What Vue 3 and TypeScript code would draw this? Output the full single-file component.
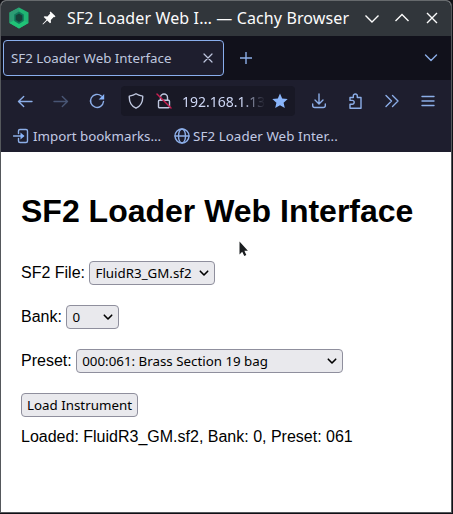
<script setup lang="ts">
import { computed, ref } from 'vue'

const files = ['FluidR3_GM.sf2']
const banks = ['0']
const presets = ['000:061: Brass Section 19 bag']

const file = ref(files[0])
const bank = ref(banks[0])
const preset = ref(presets[0])

const status = computed(
  () => `Loaded: ${file.value}, Bank: ${bank.value}, Preset: ${preset.value.split(':')[1]}`
)
</script>

<template>
  <div class="desktop">
    <div class="window">
      <header class="titlebar">
        <svg class="app-icon" width="20" height="22" viewBox="0 0 20 22">
          <path d="M10 0.5 19.5 5.5V16L10 21.5.5 16V5.500Z" fill="#20b573" />
          <path d="M10 .5.5 5.500V16L5 13V8l5-3Z" fill="#2d9c74" />
          <path d="M.5 16 10 21.500 19.500 16 14.500 13.500 10 16 5 13.500Z" fill="#20c477" />
          <path d="M10 4.500 14.800 7.500V14L10 17 5.200 14V7.500Z" fill="#10765a" />
          <path d="M10 6.500 13.300 8.500V13L10 15 6.700 13V8.500Z" fill="#173f38" />
        </svg>
        <svg class="pin" width="14" height="14" viewBox="0 0 14 14">
          <path d="M8.500.5 13.500 5.300 12.400 6.200 11.700 5.900 8.800 8.900 9 11.500 8 12.300 5.200 9.500 1 13.500.5 13 4.500 8.800 1.700 6 2.500 5.200 5.400 5.400 8.200 2.400 7.700 1.400Z" fill="#fcfcfc" />
        </svg>
        <span class="title">SF2 Loader Web I… — Cachy Browser</span>
        <div class="controls">
          <svg width="30" height="20" viewBox="0 0 30 20"><path d="m8.500 7.500 6.500 6.500 6.500-6.500" /></svg>
          <svg width="30" height="20" viewBox="0 0 30 20"><path d="m8.500 13 6.500-6.500 6.500 6.500" /></svg>
          <svg width="30" height="20" viewBox="0 0 30 20"><path d="m10 5 10 10M20 5 10 15" /></svg>
        </div>
      </header>

      <div class="tabs">
        <div class="tab">
          <span class="tab-name">SF2 Loader Web Interface</span>
          <svg width="10" height="10" viewBox="0 0 10 10"><path d="m1 1 8 8M9 1 1 9" /></svg>
        </div>
        <svg class="new-tab" width="12" height="12" viewBox="0 0 12 12"><path d="M6 .3v11.400M.3 6h11.400" /></svg>
        <svg class="all-tabs" width="14" height="10" viewBox="0 0 14 10"><path d="m1.500 2 5.500 5.500L12.500 2" /></svg>
      </div>

      <nav class="toolbar">
        <svg viewBox="0 0 16 16"><path d="M15 8.500H1.500M6.700 3.500 1.500 8.500 6.700 13.500" /></svg>
        <svg class="dim" viewBox="0 0 16 16"><path d="M1 8.500h13.500M9.300 3.500l5.200 5-5.200 5" /></svg>
        <svg viewBox="0 0 16 16"><path d="M12.300 3A6.500 6.500 0 1 0 14.500 8.500" /><path class="solid" d="M15.200 1v5.500H9.700Z" /></svg>
        <div class="address">
          <svg class="pale" viewBox="0 0 16 16"><path d="M8 .8C6.300 2 4 2.700 1.300 3.100 1 8.500 2.900 12.700 8 15.200 13.100 12.700 15 8.500 14.700 3.100 12 2.700 9.700 2 8 .8Z" /></svg>
          <svg class="pale lock" viewBox="0 0 16 16">
            <path d="M4.500 7V4.500a3.500 3.500 0 0 1 7 0V7M3.500 7.200h9a1 1 0 0 1 1 1v5.500a1 1 0 0 1-1 1h-9a1 1 0 0 1-1-1V8.200a1 1 0 0 1 1-1Z" />
            <path class="strike" d="m1 1 14 14" />
          </svg>
          <span class="url">192.168.1.13</span>
          <svg class="star" viewBox="0 0 16 16"><path class="solid" d="M8 .5 10.200 5.500 15.700 6 11.600 9.700 12.800 15.100 8 12.300 3.200 15.100 4.400 9.700.3 6 5.800 5.500Z" /></svg>
        </div>
        <svg viewBox="0 0 16 16"><path d="M8 1v9.500M4 7l4 4 4-4M1.700 11v1.500a2 2 0 0 0 2 2h8.600a2 2 0 0 0 2-2V11" /></svg>
        <svg viewBox="0 0 16 16"><path d="M2 6.500V4.500h3.300V3a2 2 0 0 1 4 0v1.500h3.700V15.200H2v-4h2.300a1.900 1.900 0 0 0 0-3.800H2Z" /></svg>
        <svg viewBox="0 0 16 16"><path d="m2 2.500 5.500 5.500L2 13.500M8.500 2.500 14 8l-5.500 5.500" /></svg>
        <svg viewBox="0 0 16 16"><path d="M2 3.500h12M2 8h12M2 12.500h12" /></svg>
      </nav>

      <div class="bookmarks">
        <svg class="import" viewBox="0 0 16 16"><path d="M5.500 5.500V3a1.500 1.500 0 0 1 1.500-1.500h6A1.500 1.500 0 0 1 14.500 3v10a1.500 1.500 0 0 1-1.500 1.500H7A1.500 1.500 0 0 1 5.500 13v-2.500M.5 8H10" /><path class="solid" d="m7.500 4.500 4 3.500-4 3.500Z" /></svg>
        <span class="import-name">Import bookmarks...</span>
        <svg class="globe" viewBox="0 0 16 16"><circle cx="8" cy="8" r="7" /><ellipse cx="8" cy="8" rx="3.500" ry="7" /><path d="M1 8h14" /></svg>
        <span class="page-name">SF2 Loader Web Inter...</span>
      </div>

      <main class="page">
        <h1>SF2 Loader Web Interface</h1>
        <div class="field">
          <label for="file">SF2 File:</label>
          <div class="picker file">
            <select id="file" v-model="file"><option v-for="f in files" :key="f">{{ f }}</option></select>
            <svg width="10" height="7" viewBox="0 0 10 7"><path d="m1.300 1.200 3.700 3.800 3.700-3.800" /></svg>
          </div>
        </div>
        <div class="field">
          <label for="bank">Bank:</label>
          <div class="picker bank">
            <select id="bank" v-model="bank"><option v-for="b in banks" :key="b">{{ b }}</option></select>
            <svg width="10" height="7" viewBox="0 0 10 7"><path d="m1.300 1.200 3.700 3.800 3.700-3.800" /></svg>
          </div>
        </div>
        <div class="field">
          <label for="preset">Preset:</label>
          <div class="picker preset">
            <select id="preset" v-model="preset"><option v-for="p in presets" :key="p">{{ p }}</option></select>
            <svg width="10" height="7" viewBox="0 0 10 7"><path d="m1.300 1.200 3.700 3.800 3.700-3.800" /></svg>
          </div>
        </div>
        <button type="button">Load Instrument</button>
        <p class="status">{{ status }}</p>
      </main>
      <svg class="pointer" width="10" height="16" viewBox="0 0 10 16"><path d="M.5.5v13l2.700-2.800L5.300 15l2-1-1.900-4.200h3.500Z" /></svg>
    </div>
  </div>
</template>

<style>
body {
  background: #15171b;
}
</style>

<style scoped>
* {
  box-sizing: border-box;
}
.desktop {
  width: 453px;
  height: 514px;
  padding: 0 1px 1px 0;
  background: #101116;
  font-family: 'Noto Sans', sans-serif;
}
.window {
  position: relative;
  display: flex;
  flex-direction: column;
  height: 513px;
  border: 1px solid #55585c;
  border-top-color: #666a6d;
  border-radius: 6px 6px 0 0;
  overflow: hidden;
  background: #fff;
}
svg {
  display: block;
  flex: none;
  fill: none;
  stroke: #8caee8;
  stroke-width: 1.4;
  stroke-linecap: round;
  stroke-linejoin: round;
}
.titlebar {
  display: flex;
  align-items: center;
  height: 35px;
  padding: 0 0 1px 8px;
  background: #31363b;
  color: #fcfcfc;
}
.app-icon,
.pin {
  stroke: none;
}
.pin {
  margin-left: 13px;
}
.title {
  width: 290px;
  margin-left: 11px;
  font-size: 16px;
  letter-spacing: 0.13px;
  line-height: 32px;
  white-space: nowrap;
}
.controls {
  display: flex;
}
.controls svg {
  stroke: #fcfcfc;
  stroke-linecap: butt;
  stroke-linejoin: miter;
}
.tabs {
  display: flex;
  align-items: center;
  height: 44px;
  padding-left: 2px;
  background: #11111b;
}
.tab {
  display: flex;
  align-items: center;
  justify-content: space-between;
  width: 221px;
  height: 36px;
  padding: 0 10px 0 7px;
  border: 1px solid #89aeed;
  border-radius: 4px;
  background: #1e1e2e;
  color: #bfc7df;
}
.tab svg {
  stroke: #bfc7df;
  stroke-width: 1.2;
}
.tab-name {
  font-size: 13.333px;
}
.new-tab {
  margin-left: 16px;
}
.all-tabs {
  margin-left: auto;
  margin-right: 13px;
}
.toolbar {
  display: grid;
  grid-template-columns: 36px 36px 36px 186px 36px 38px 34px 38px;
  align-items: center;
  justify-items: center;
  height: 44px;
  padding: 0 0 2px 6px;
  background: #1e1e2e;
}
.toolbar svg,
.bookmarks svg {
  width: 16px;
  height: 16px;
}
.toolbar svg.dim {
  stroke: #485574;
}
.address {
  display: flex;
  align-items: center;
  width: 174px;
  height: 30px;
  padding: 0 7px;
  border-radius: 4px;
  background: #181825;
}
.address svg.pale {
  stroke: #bfc7df;
}
.address .lock {
  margin-left: 12px;
}
.address svg .strike {
  stroke: #c91e51;
}
.solid {
  fill: #89b4fa;
  stroke: none;
}
.url {
  width: 83px;
  margin-left: 10px;
  overflow: hidden;
  color: #cdd6f4;
  font-size: 14px;
  white-space: nowrap;
  mask-image: linear-gradient(90deg, #000 72%, transparent);
}
.star {
  margin-left: 7px;
}
.bookmarks {
  display: flex;
  align-items: center;
  height: 28px;
  padding: 0 0 4px 12px;
  background: #1e1e2e;
  color: #c2cae4;
  font-size: 13.333px;
  white-space: nowrap;
}
.import-name {
  width: 129px;
  margin-left: 4px;
}
.globe {
  margin-left: 12px;
}
.page-name {
  margin-left: 3px;
  letter-spacing: 0.08px;
}
.page {
  padding: 41px 20px 0;
  color: #000;
  font: 16px/18px 'Liberation Sans', Arial, sans-serif;
}
h1 {
  margin: 0 0 31px;
  font-size: 32px;
  line-height: 37px;
  white-space: nowrap;
}
.field {
  display: flex;
  align-items: center;
  gap: 4px;
  height: 24px;
  margin-bottom: 20px;
}
.picker {
  display: flex;
  align-items: center;
  position: relative;
  height: 24px;
}
.picker.file {
  width: 126px;
}
.picker.bank {
  width: 53px;
}
.picker.preset {
  width: 267px;
}
select,
button {
  height: 24px;
  margin: 0;
  border: 1px solid #8f8f9d;
  border-radius: 4px;
  background: #e9e9ed;
  color: #000;
  font: 13.333px 'Noto Sans', sans-serif;
}
select {
  width: 100%;
  padding: 0 20px 0 5.500px;
  appearance: none;
}
.picker svg {
  position: absolute;
  right: 6px;
  stroke: #000;
  stroke-width: 1.6;
  pointer-events: none;
}
button {
  display: block;
  width: 117px;
  padding: 0;
  white-space: nowrap;
}
.status {
  margin: 11px 0 0;
}
.pointer {
  position: absolute;
  left: 238px;
  top: 240px;
  fill: #1b1e20;
  stroke: none;
}
</style>
